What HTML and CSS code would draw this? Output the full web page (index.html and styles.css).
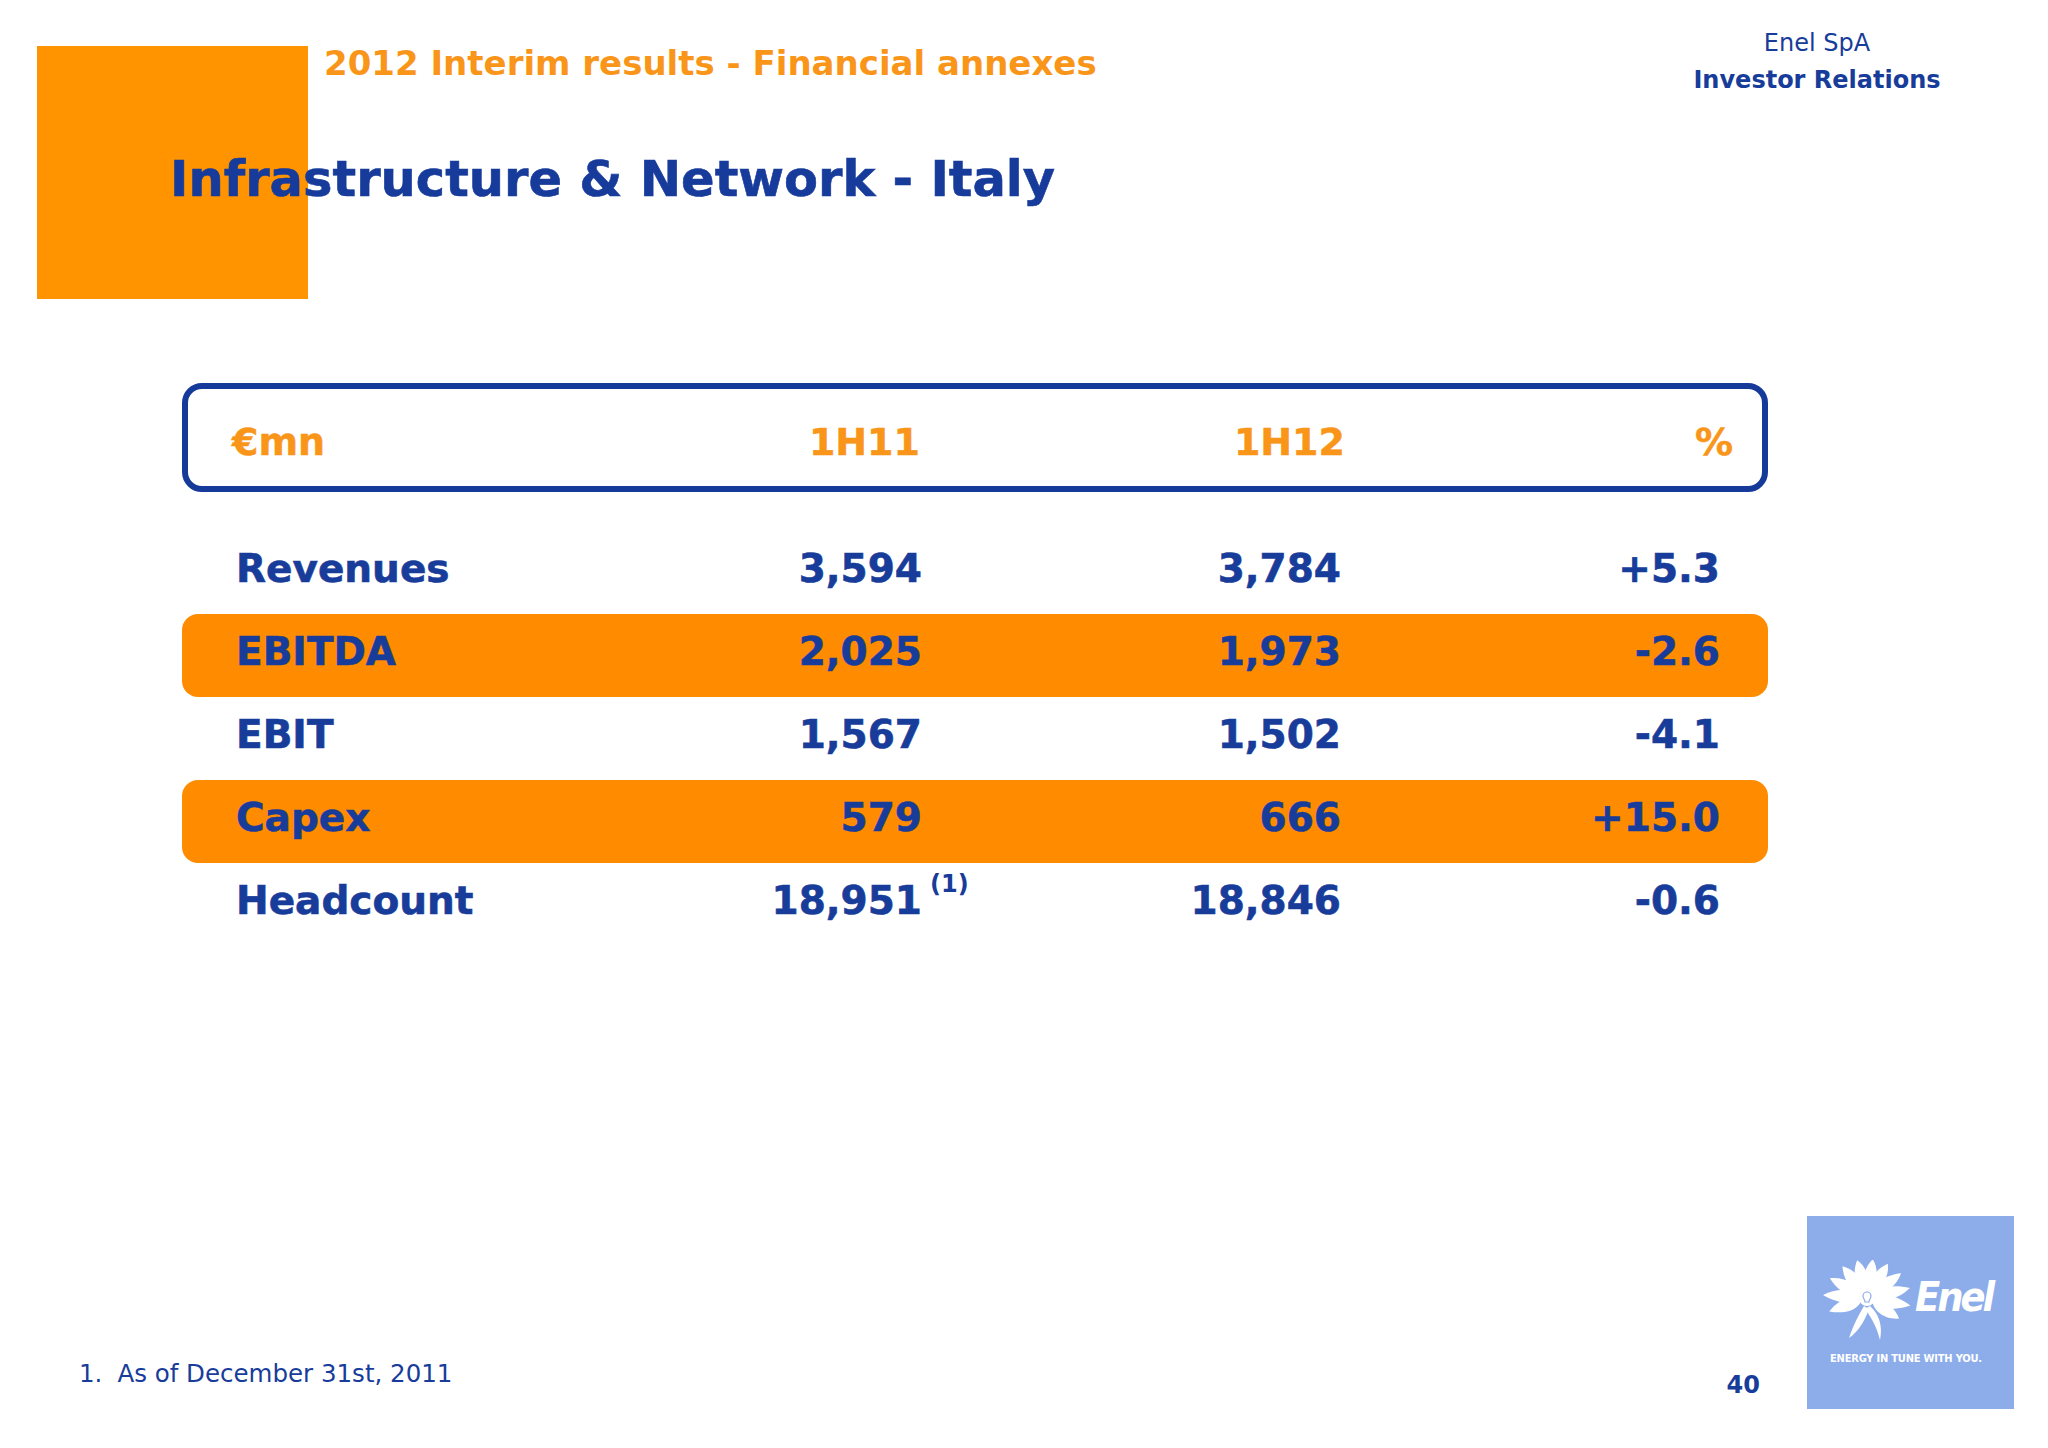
FILE: index.html
```html
<!DOCTYPE html>
<html lang="en">
<head>
<meta charset="utf-8">
<title>Infrastructure &amp; Network - Italy</title>
<link rel="stylesheet" href="styles.css">
</head>
<body>
<div class="slide">
  <div class="deco"></div>
  <header class="top">
    <div class="titles">
      <div class="subtitle">2012 Interim results - Financial annexes</div>
      <h1 class="title">Infrastructure &amp; Network - Italy</h1>
    </div>
    <div class="ir">
      <div class="ir-company">Enel SpA</div>
      <div class="ir-dept">Investor Relations</div>
    </div>
  </header>

  <section class="table">
    <div class="thead">
      <div class="th th-label">€mn</div>
      <div class="th">1H11</div>
      <div class="th">1H12</div>
      <div class="th">%</div>
    </div>
    <div class="rows">
      <div class="row"><div class="label">Revenues</div><div class="num">3,594</div><div class="num">3,784</div><div class="num">+5.3</div></div>
      <div class="row hl"><div class="label">EBITDA</div><div class="num">2,025</div><div class="num">1,973</div><div class="num">-2.6</div></div>
      <div class="row"><div class="label">EBIT</div><div class="num">1,567</div><div class="num">1,502</div><div class="num">-4.1</div></div>
      <div class="row hl"><div class="label">Capex</div><div class="num">579</div><div class="num">666</div><div class="num">+15.0</div></div>
      <div class="row"><div class="label">Headcount</div><div class="num"><span class="val">18,951<span class="note">(1)</span></span></div><div class="num">18,846</div><div class="num">-0.6</div></div>
    </div>
  </section>

  <footer class="bottom">
    <div class="footnote"><span class="fn-num">1.</span>As of December 31st, 2011</div>
    <div class="page">40</div>
    <div class="logo">
      <div class="logo-top">
        <svg class="tree" width="90" height="80" viewBox="0 0 90 80" aria-hidden="true">
          <g fill="#ffffff" transform="translate(44,38)">
            <path transform="rotate(-114)" d="M0,-6 C10,-13 10,-28 3,-40 C-5,-28 -8,-15 0,-6Z"/>
            <path transform="rotate(-90)" d="M0,-6 C10,-14 10,-30 3,-44 C-5,-30 -8,-16 0,-6Z"/>
            <path transform="rotate(-66)" d="M0,-6 C10,-14 10,-30 3,-42 C-5,-30 -8,-16 0,-6Z"/>
            <path transform="rotate(-42)" d="M0,-6 C10,-14 10,-30 3,-40 C-5,-30 -8,-16 0,-6Z"/>
            <path transform="rotate(-19)" d="M0,-6 C10,-14 10,-30 3,-39 C-5,-30 -8,-16 0,-6Z"/>
            <path transform="rotate(4)" d="M0,-6 C10,-14 10,-30 3,-39 C-5,-30 -8,-16 0,-6Z"/>
            <path transform="rotate(27)" d="M0,-6 C10,-14 10,-30 3,-40 C-5,-30 -8,-16 0,-6Z"/>
            <path transform="rotate(50)" d="M0,-6 C10,-14 10,-30 3,-42 C-5,-30 -8,-16 0,-6Z"/>
            <path transform="rotate(73)" d="M0,-6 C10,-14 10,-30 3,-44 C-5,-30 -8,-16 0,-6Z"/>
            <path transform="rotate(96)" d="M0,-6 C10,-14 10,-30 3,-44 C-5,-30 -8,-16 0,-6Z"/>
            <path transform="rotate(118)" d="M0,-6 C10,-13 10,-28 3,-38 C-5,-28 -8,-15 0,-6Z"/>
            <circle cx="0" cy="0" r="8"/>
            <path d="M-3,8 C-9,18 -14,28 -18,40 C-8,33 -2,22 2,11Z"/>
            <path d="M3,8 C12,16 16,28 13,42 C10,30 6,22 -2,11Z"/>
          </g>
          <path d="M40,36 a4,4 0 1 1 8,0 c0,2.5 -2,3.5 -2,6 h-4 c0,-2.5 -2,-3.5 -2,-6Z" fill="none" stroke="#8dadea" stroke-width="1.2"/>
        </svg>
        <span class="enel">Enel</span>
      </div>
      <div class="tagline">ENERGY IN TUNE WITH YOU.</div>
    </div>
  </footer>
</div>
</body>
</html>
```

FILE: styles.css
```css
html, body {
  margin: 0;
  padding: 0;
  background: #ffffff;
}

.slide {
  position: relative;
  width: 2048px;
  height: 1448px;
  overflow: hidden;
  display: flex;
  flex-direction: column;
  font-family: "DejaVu Sans", Verdana, sans-serif;
  color: #183c9a;
}

/* decorative orange block behind the title */
.deco {
  position: absolute;
  left: 37px;
  top: 46px;
  width: 271px;
  height: 253px;
  background: #ff9400;
}

.top {
  position: relative;
  display: flex;
  justify-content: space-between;
  align-items: flex-start;
}

.titles {
  padding-left: 170px;
  padding-top: 46px;
}

.subtitle {
  margin-left: 154px;
  font-size: 34px;
  font-weight: bold;
  line-height: 1;
  color: #f9961a;
  white-space: nowrap;
}

.title {
  margin: 75px 0 0 0;
  font-size: 49.5px;
  font-weight: bold;
  line-height: 1;
  color: #173b9b;
  white-space: nowrap;
  -webkit-text-stroke: 0.6px #173b9b;
}

.ir {
  width: 300px;
  margin-right: 81px;
  padding-top: 25px;
  text-align: center;
  font-size: 24px;
  line-height: 37px;
  color: #183c9a;
}

.ir-dept {
  font-weight: bold;
}

/* table */
.table {
  position: relative;
  margin-top: 178.5px;
  margin-left: 182px;
  width: 1586px;
}

.thead {
  box-sizing: border-box;
  height: 109px;
  border: 6px solid #163a99;
  border-radius: 20px;
  display: grid;
  grid-template-columns: 400px 288px 425px 388px;
  align-items: center;
  padding-left: 44px;
  padding-top: 8px;
}

.th {
  font-size: 38px;
  font-weight: bold;
  line-height: 1;
  color: #f9961a;
  text-align: right;
  -webkit-text-stroke: 0.5px #f9961a;
}

.th-label {
  text-align: left;
}

.rows {
  margin-top: 39px;
}

.row {
  display: grid;
  grid-template-columns: 404px 282px 419px 379px;
  padding-left: 54px;
  height: 83px;
  line-height: 75px;
  font-size: 39px;
  font-weight: bold;
  color: #183c9a;
  border-radius: 16px;
  -webkit-text-stroke: 0.6px #183c9a;
}

.row.hl {
  background: #ff8c00;
}

.num {
  text-align: right;
}

.val {
  position: relative;
}

.note {
  position: absolute;
  left: 100%;
  top: -6px;
  margin-left: 8px;
  font-size: 24px;
  line-height: 1;
  white-space: nowrap;
  -webkit-text-stroke: 0;
}

/* footer */
.bottom {
  margin-top: auto;
  display: flex;
  align-items: flex-end;
  padding: 0 34px 39px 79px;
}

.footnote {
  flex: 1;
  font-size: 24.5px;
  line-height: 1;
  margin-bottom: 23px;
  color: #183c9a;
}

.fn-num {
  margin-right: 15px;
}

.page {
  font-size: 24px;
  font-weight: bold;
  line-height: 1;
  margin-right: 47px;
  margin-bottom: 12px;
  color: #183c9a;
}

.logo {
  box-sizing: border-box;
  width: 207px;
  height: 193px;
  padding-top: 44px;
  background: #8dadea;
  display: flex;
  flex-direction: column;
}

.logo-top {
  display: flex;
  align-items: flex-start;
  padding-left: 16px;
}

.tree {
  display: block;
  flex: none;
}

.enel {
  margin-left: 2px;
  margin-top: 17px;
  font-family: "DejaVu Sans Condensed", "DejaVu Sans", sans-serif;
  font-stretch: condensed;
  font-style: italic;
  font-weight: bold;
  font-size: 41px;
  line-height: 1;
  letter-spacing: -3px;
  color: #ffffff;
}

.tagline {
  margin-top: 13px;
  padding-left: 23px;
  font-family: "DejaVu Sans Condensed", "DejaVu Sans", sans-serif;
  font-stretch: condensed;
  font-weight: bold;
  font-size: 11px;
  line-height: 1;
  letter-spacing: -0.2px;
  color: #ffffff;
  white-space: nowrap;
}
```
